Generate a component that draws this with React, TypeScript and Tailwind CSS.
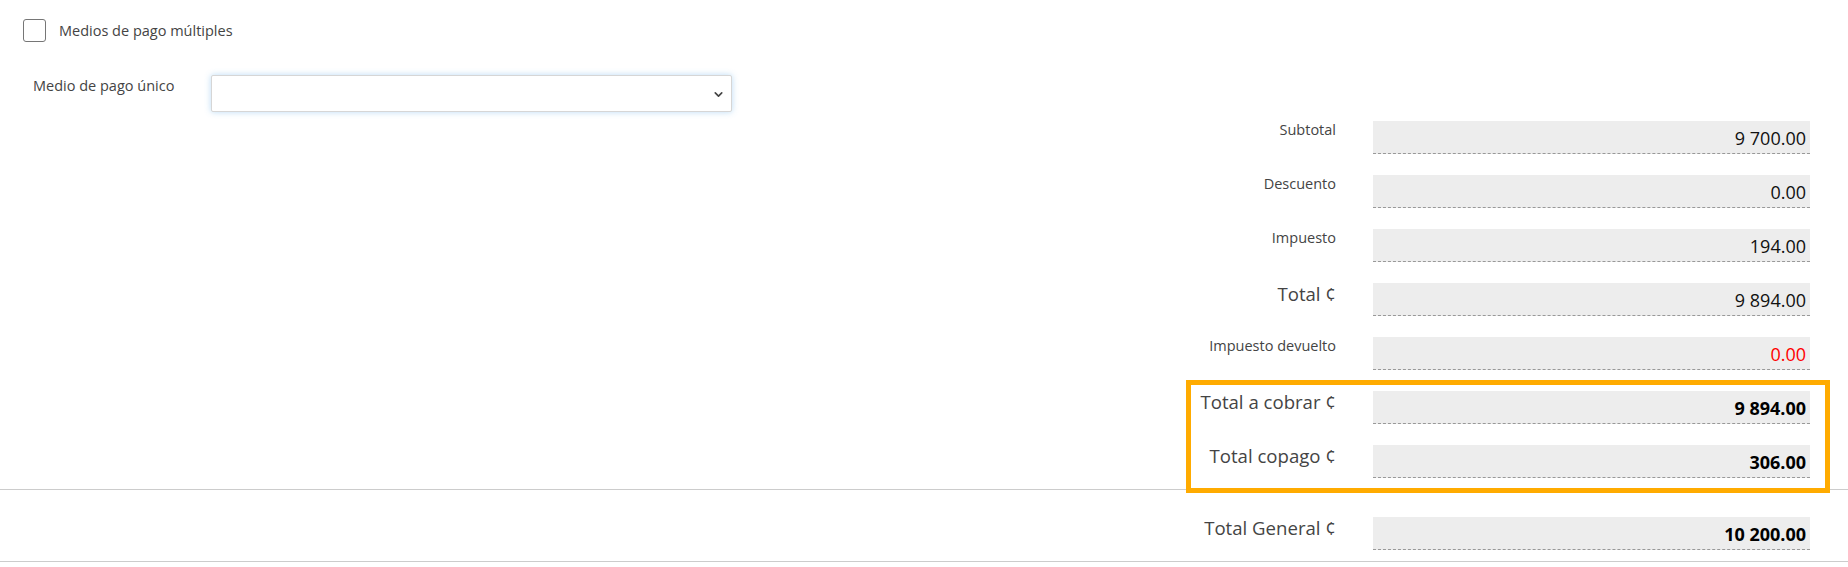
import { ChevronDown } from 'lucide-react';

type Row = {
  label: string;
  value: string;
  big?: boolean;
  bold?: boolean;
  red?: boolean;
};

const topRows: Row[] = [
  { label: 'Subtotal', value: '9 700.00' },
  { label: 'Descuento', value: '0.00' },
  { label: 'Impuesto', value: '194.00' },
  { label: 'Total ¢', value: '9 894.00', big: true },
  { label: 'Impuesto devuelto', value: '0.00', red: true },
];

const highlightRows: Row[] = [
  { label: 'Total a cobrar ¢', value: '9 894.00', big: true, bold: true },
  { label: 'Total copago ¢', value: '306.00', big: true, bold: true },
];

function TotalRow({ row }: { row: Row }) {
  return (
    <div className="flex items-start">
      <div
        className={`text-right text-[#444] ${row.big ? 'text-[18.6px] leading-[24px] -mt-[1px]' : 'text-[14.5px] leading-[20px] -mt-[1px]'}`}
      >
        {row.label}
      </div>
      <div
        className={`ml-[37px] w-[437px] h-[33px] bg-[#ededed] border-b border-dashed border-[#999] flex items-end justify-end pr-[4px] pb-[3px] text-[18px] leading-[24px] ${row.bold ? 'font-bold text-black' : 'text-[#111]'} ${row.red ? 'text-[#ff0000]' : ''}`}
      >
        {row.value}
      </div>
    </div>
  );
}

export default function App() {
  return (
    <div className="w-[1848px] h-[567px] bg-white overflow-hidden font-['Open_Sans',sans-serif] text-[#333]">
      {/* Medios de pago */}
      <div className="flex items-center pl-[23px] pt-[19px]">
        <span className="w-[23px] h-[23px] border border-[#767676] rounded-[3px] bg-white" />
        <span className="ml-[13px] text-[14.5px] text-[#444]">Medios de pago múltiples</span>
      </div>

      <div className="flex items-start pl-[33px] mt-[33px]">
        <label className="w-[178px] text-[14.5px] leading-[20px] text-[#444] pt-[1px]">Medio de pago único</label>
        <div className="relative w-[521px] h-[37px] bg-white border border-[#d6d6d6] rounded-[2px] shadow-[0_0_6px_rgba(102,175,233,0.45)]">
          <ChevronDown className="absolute right-[6px] top-[12px] w-[13px] h-[13px] text-[#444]" strokeWidth={3} />
        </div>
      </div>

      {/* Totales */}
      <div className="flex flex-col items-end pr-[38px] mt-[9px]">
        <div className="flex flex-col items-end gap-[21px]">
          {topRows.map((r) => (
            <TotalRow key={r.label} row={r} />
          ))}
        </div>
      </div>

      <div className="relative z-10 flex justify-end pr-[18px] mt-[10px]">
        <div className="w-[644px] border-[5px] border-[#ffab00] pt-[6px] pr-[15px] pb-[10px] flex flex-col items-end gap-[21px]">
          {highlightRows.map((r) => (
            <TotalRow key={r.label} row={r} />
          ))}
        </div>
      </div>
      <div className="border-t border-[#cccccc] -mt-[4px]" />

      <div className="flex justify-end pr-[38px] pt-[27px] pb-[11px]">
        <TotalRow row={{ label: 'Total General ¢', value: '10 200.00', big: true, bold: true }} />
      </div>
      <div className="border-t border-[#cccccc]" />
    </div>
  );
}
